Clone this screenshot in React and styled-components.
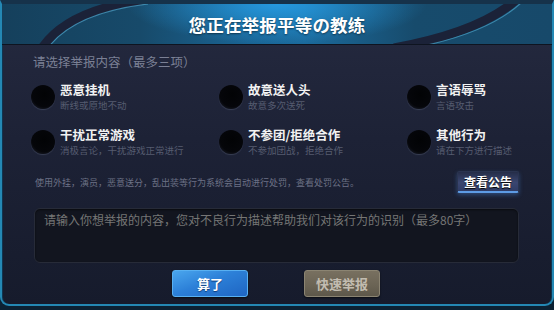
import React from "react";
import styled, { createGlobalStyle } from "styled-components";

const GlobalStyle = createGlobalStyle`
  html, body {
    margin: 0;
    padding: 0;
    background: #0c2133;
  }
  body {
    font-family: "Noto Sans CJK SC", "Noto Sans", sans-serif;
  }
`;

const Panel = styled.div`
  width: 554px;
  height: 306px;
  box-sizing: border-box;
  display: flex;
  flex-direction: column;
  border: 2px solid #2488b4;
  border-top: 4px solid #16324a;
  border-radius: 0 0 9px 9px;
  box-shadow: inset 1px 0 0 #0f3550, inset -1px 0 0 #0f3550;
  background: linear-gradient(to bottom, #252a40 0%, #1d2236 45%, #161b2c 100%);
  overflow: hidden;
`;

const Header = styled.div`
  position: relative;
  height: 40px;
  flex: none;
  display: flex;
  align-items: center;
  justify-content: center;
  border-bottom: 1px solid #0e1420;
  background:
    radial-gradient(ellipse 150px 40px at 50% 0%, rgba(40, 165, 240, 0.8), rgba(40, 160, 235, 0) 100%),
    linear-gradient(to right, #15405c 0%, #174a6a 25%, #1a6494 45%, #1b6a9c 55%, #174b6c 75%, #17496a 100%);
`;

const Decor = styled.svg`
  position: absolute;
  left: 0;
  top: 0;
  width: 100%;
  height: 100%;
`;

const Title = styled.h1`
  position: relative;
  margin: 0;
  font-size: 17.5px;
  font-weight: 700;
  color: #ffffff;
  letter-spacing: 0.2px;
  text-shadow: 0 1px 2px rgba(0, 0, 0, 0.5);
`;

const Body = styled.div`
  flex: 1;
  display: flex;
  flex-direction: column;
  padding: 9px 33px 0 29px;
`;

const SectionLabel = styled.div`
  font-size: 12.5px;
  line-height: 16px;
  color: #7b8095;
  padding-left: 2px;
`;

const Options = styled.div`
  display: grid;
  grid-template-columns: 188px 188px 1fr;
  row-gap: 17px;
  margin-top: 13px;
`;

const Option = styled.div`
  display: flex;
  align-items: center;
  gap: 5px;
`;

const Radio = styled.div`
  width: 24px;
  height: 24px;
  flex: none;
  border-radius: 50%;
  background: radial-gradient(circle at 55% 40%, #020305 0%, #05060a 62%, #1b1f2b 88%, #3a3f50 100%);
  box-shadow: 0 1px 1px rgba(110, 118, 140, 0.35);
`;

const OptionText = styled.div`
  display: flex;
  flex-direction: column;
  gap: 3px;
`;

const OptionTitle = styled.div`
  font-size: 12.5px;
  line-height: 14px;
  font-weight: 700;
  color: #f2f2f2;
`;

const OptionSub = styled.div`
  font-size: 9.5px;
  line-height: 11px;
  color: #565c70;
`;

const NoticeRow = styled.div`
  display: flex;
  align-items: center;
  justify-content: space-between;
  margin-top: 15px;
  padding-left: 4px;
`;

const Notice = styled.div`
  font-size: 9px;
  color: #6d7286;
`;

const SmallButton = styled.button`
  width: 62px;
  height: 22px;
  padding: 0;
  border: 1px solid #2a3450;
  border-bottom: 2px solid #5d9be4;
  border-radius: 2px;
  background: linear-gradient(to bottom, #252d48 0%, #3a4670 55%, #2f3c66 100%);
  box-shadow: 0 2px 4px rgba(80, 150, 240, 0.35);
  color: #ffffff;
  font-family: inherit;
  font-size: 12px;
  font-weight: 700;
  text-shadow: 0 1px 1px #000;
`;

const TextBox = styled.textarea`
  margin: 15px 0 0 3px;
  height: 55px;
  box-sizing: border-box;
  resize: none;
  padding: 2px 9px;
  border: 1px solid #272b38;
  border-radius: 6px;
  background: #12151f;
  box-shadow: inset 0 1px 2px rgba(0, 0, 0, 0.5);
  font-family: inherit;
  font-size: 12px;
  line-height: 18px;
  color: #c8ccd8;
  outline: none;

  ::placeholder {
    color: #8a8e9c;
  }
`;

const ActionRow = styled.div`
  display: flex;
  justify-content: center;
  gap: 56px;
  margin-top: 7px;
  padding-left: 2px;
`;

const ActionButton = styled.button`
  width: 76px;
  height: 27px;
  padding: 0;
  border-radius: 3px;
  font-family: inherit;
  font-size: 13px;
  font-weight: 700;
  border: 1px solid ${props => (props.primary ? "#58b0f2" : "#8b8472")};
  background: ${props =>
    props.primary
      ? "linear-gradient(160deg, #4aa6ee 0%, #2c80d8 45%, #1f65c2 100%)"
      : "linear-gradient(to bottom, #787060 0%, #6a6354 60%, #5d574a 100%)"};
  color: ${props => (props.primary ? "#ffffff" : "#c2bcb0")};
  text-shadow: ${props => (props.primary ? "0 1px 1px #0b3a7a" : "none")};
  box-shadow: 0 1px 2px rgba(0, 0, 0, 0.6);
`;

const options = [
  { title: "恶意挂机", sub: "断线或原地不动" },
  { title: "故意送人头", sub: "故意多次送死" },
  { title: "言语辱骂", sub: "言语攻击" },
  { title: "干扰正常游戏", sub: "消极言论，干扰游戏正常进行" },
  { title: "不参团/拒绝合作", sub: "不参加团战，拒绝合作" },
  { title: "其他行为", sub: "请在下方进行描述" }
];

function HeaderArcs() {
  return (
    <Decor viewBox="0 0 550 40" preserveAspectRatio="none">
      <path d="M40 44 Q66 6 142 -4" fill="none" stroke="#1b2238" strokeWidth="9" />
      <path d="M46 44 Q72 9 146 0" fill="none" stroke="#4aa2c8" strokeWidth="1.2" opacity="0.75" />
      <path d="M392 44 Q478 28 514 -4" fill="none" stroke="#1b2238" strokeWidth="9" />
      <path d="M394 47 Q482 33 519 -1" fill="none" stroke="#4aa2c8" strokeWidth="1.2" opacity="0.7" />
    </Decor>
  );
}

export default function App() {
  return (
    <>
      <GlobalStyle />
      <Panel>
        <Header>
          <HeaderArcs />
          <Title>您正在举报平等の教练</Title>
        </Header>
        <Body>
          <SectionLabel>请选择举报内容（最多三项）</SectionLabel>
          <Options>
            {options.map(o => (
              <Option key={o.title}>
                <Radio />
                <OptionText>
                  <OptionTitle>{o.title}</OptionTitle>
                  <OptionSub>{o.sub}</OptionSub>
                </OptionText>
              </Option>
            ))}
          </Options>
          <NoticeRow>
            <Notice>使用外挂，演员，恶意送分，乱出装等行为系统会自动进行处罚，查看处罚公告。</Notice>
            <SmallButton>查看公告</SmallButton>
          </NoticeRow>
          <TextBox placeholder="请输入你想举报的内容，您对不良行为描述帮助我们对该行为的识别（最多80字）" />
          <ActionRow>
            <ActionButton primary>算了</ActionButton>
            <ActionButton>快速举报</ActionButton>
          </ActionRow>
        </Body>
      </Panel>
    </>
  );
}
